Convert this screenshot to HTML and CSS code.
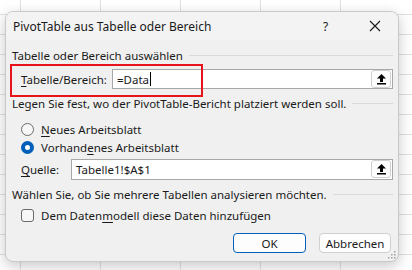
FILE: index.html
```html
<!DOCTYPE html>
<html lang="de">
<head>
    <meta charset="UTF-8">
    <title>PivotTable aus Tabelle oder Bereich</title>
    <link rel="stylesheet" href="styles.css">
</head>
<body>

    <!-- Dialog -->
    <div class="dialog">
        <div class="titlebar">
            <span class="title">PivotTable aus Tabelle oder Bereich</span>
            <span class="help">?</span>
            <svg class="close" width="12" height="12" viewBox="0 0 12 12">
                <path d="M1 1 L11 11 M11 1 L1 11" stroke="#1a1a1a" stroke-width="1.1" fill="none"/>
            </svg>
        </div>

        <div class="content">
            <div class="group">Tabelle oder Bereich auswählen</div>

            <div class="row range-row">
                <span class="label"><u>T</u>abelle/Bereich:</span>
                <div class="input range-input">
                    <span class="value">=Data</span><span class="caret"></span>
                    <span class="picker">
                        <svg width="9" height="11" viewBox="0 0 9 11">
                            <path d="M4.5 0 L9 4.5 L6 4.5 L6 8 L3 8 L3 4.5 L0 4.5 Z" fill="#000"/>
                            <rect x="0" y="9" width="9" height="1.5" fill="#000"/>
                        </svg>
                    </span>
                </div>
                <div class="highlight"></div>
            </div>

            <div class="group g2">Legen Sie fest, wo der PivotTable-Bericht platziert werden soll.</div>

            <div class="row option first">
                <span class="radio"></span>
                <span><u>N</u>eues Arbeitsblatt</span>
            </div>
            <div class="row option">
                <span class="radio checked"></span>
                <span>Vorhand<u>e</u>nes Arbeitsblatt</span>
            </div>

            <div class="row source-row">
                <span class="label"><u>Q</u>uelle:</span>
                <div class="input source-input">
                    <span class="value">Tabelle1!$A$1</span>
                    <span class="picker">
                        <svg width="9" height="11" viewBox="0 0 9 11">
                            <path d="M4.5 0 L9 4.5 L6 4.5 L6 8 L3 8 L3 4.5 L0 4.5 Z" fill="#000"/>
                            <rect x="0" y="9" width="9" height="1.5" fill="#000"/>
                        </svg>
                    </span>
                </div>
            </div>

            <div class="group g3">Wählen Sie, ob Sie mehrere Tabellen analysieren möchten.</div>

            <div class="row option check-row">
                <span class="checkbox"></span>
                <span>Dem Daten<u>m</u>odell diese Daten hinzufügen</span>
            </div>

            <div class="buttons">
                <button class="btn primary">OK</button>
                <button class="btn">Abbrechen</button>
            </div>
        </div>

        <svg class="grip" width="8" height="8" viewBox="0 0 8 8">
            <rect x="6" y="0" width="1.5" height="1.5" fill="#a0a0a0"/>
            <rect x="3" y="3" width="1.5" height="1.5" fill="#a0a0a0"/>
            <rect x="6" y="3" width="1.5" height="1.5" fill="#a0a0a0"/>
            <rect x="0" y="6" width="1.5" height="1.5" fill="#a0a0a0"/>
            <rect x="3" y="6" width="1.5" height="1.5" fill="#a0a0a0"/>
            <rect x="6" y="6" width="1.5" height="1.5" fill="#a0a0a0"/>
        </svg>
    </div>

</body>
</html>
```

FILE: styles.css
```css
/* General Reset */
* {
    margin: 0;
    padding: 0;
    box-sizing: border-box;
}

/* Spreadsheet grid behind the dialog */
body {
    font-family: 'Noto Sans', 'Liberation Sans', sans-serif;
    font-size: 11.5px;
    color: #1a1a1a;
    width: 412px;
    height: 270px;
    overflow: hidden;
    background-color: #ffffff;
    background-image:
        linear-gradient(to right, #e1e1e1 1px, transparent 1px),
        linear-gradient(to bottom, #e1e1e1 1px, transparent 1px);
    background-size: 80px 20px;
    background-position: 20px 14px;
    padding-top: 11px;
    padding-left: 5px;
}

/* Dialog */
.dialog {
    position: relative;
    width: 394px;
    height: 251px;
    background-color: #f0f0f0;
    border: 1px solid #c9c9c9;
    border-radius: 8px;
    box-shadow: 0 4px 14px rgba(0, 0, 0, 0.22);
    overflow: hidden;
}

.titlebar {
    display: flex;
    align-items: center;
    height: 28px;
    padding-left: 7px;
    background-color: #f3f3f3;
}

.title {
    flex: 1;
    font-size: 12px;
    padding-top: 1px;
}

.help {
    width: 12px;
    font-size: 12px;
    margin-right: 34px;
}

.close {
    margin-right: 17px;
}

.content {
    padding: 6px 5px 0 6px;
}

/* Group headers with a line */
.group {
    display: flex;
    align-items: center;
    height: 18px;
}

.group::after {
    content: "";
    flex: 1;
    border-top: 1px solid #dadada;
    margin-left: 6px;
}

.g2 {
    margin-top: 5px;
}

.g3 {
    margin-top: 5px;
}

.row {
    display: flex;
    align-items: center;
    position: relative;
}

.label {
    padding-left: 9px;
}

u {
    text-decoration-thickness: 1px;
    text-underline-offset: 2px;
}

/* Inputs */
.input {
    position: relative;
    display: flex;
    align-items: center;
    height: 20px;
    background-color: #ffffff;
    border: 1px solid #a8a8a8;
    padding-left: 4px;
}

.range-row {
    height: 20px;
    margin-top: 5px;
}

.range-input {
    margin-left: auto;
    width: 281px;
}

.source-row {
    height: 21px;
    margin-top: 3px;
}

.source-input {
    margin-left: 12px;
    flex: 1;
    height: 21px;
}

.caret {
    width: 1px;
    height: 14px;
    background-color: #000;
    margin-left: 1px;
}

.picker {
    position: absolute;
    right: 1px;
    top: 0;
    width: 20px;
    height: 18px;
    display: flex;
    align-items: center;
    justify-content: center;
    border: 1px solid #d0d0d0;
    border-radius: 3px;
    background-color: #fdfdfd;
}

/* Red annotation box */
.highlight {
    position: absolute;
    left: -2px;
    top: -5px;
    width: 193px;
    height: 33px;
    border: 2px solid #e8141c;
}

/* Radio buttons / checkbox */
.option {
    height: 18px;
    padding-left: 9px;
}

.option.first {
    margin-top: 8px;
}

.radio {
    width: 13px;
    height: 13px;
    border: 1px solid #6a6a6a;
    border-radius: 50%;
    background-color: #f7f7f7;
    margin-right: 7px;
}

.radio.checked {
    border: 4px solid #005fb8;
    background-color: #ffffff;
}

.check-row {
    margin-top: 3px;
}

.checkbox {
    width: 13px;
    height: 13px;
    border: 1px solid #6a6a6a;
    border-radius: 3px;
    background-color: #f7f7f7;
    margin-right: 7px;
}

/* Buttons */
.buttons {
    display: flex;
    justify-content: flex-end;
    gap: 13px;
    margin-top: 9px;
    padding-right: 2px;
}

.btn {
    font-family: inherit;
    font-size: 11.5px;
    color: #1a1a1a;
    height: 20px;
    width: 72px;
    background-color: #fdfdfd;
    border: 1px solid #d0d0d0;
    border-radius: 4px;
}

.btn.primary {
    width: 73px;
    border: 1px solid #005fb8;
}

.grip {
    position: absolute;
    right: 2px;
    bottom: 2px;
}
```
